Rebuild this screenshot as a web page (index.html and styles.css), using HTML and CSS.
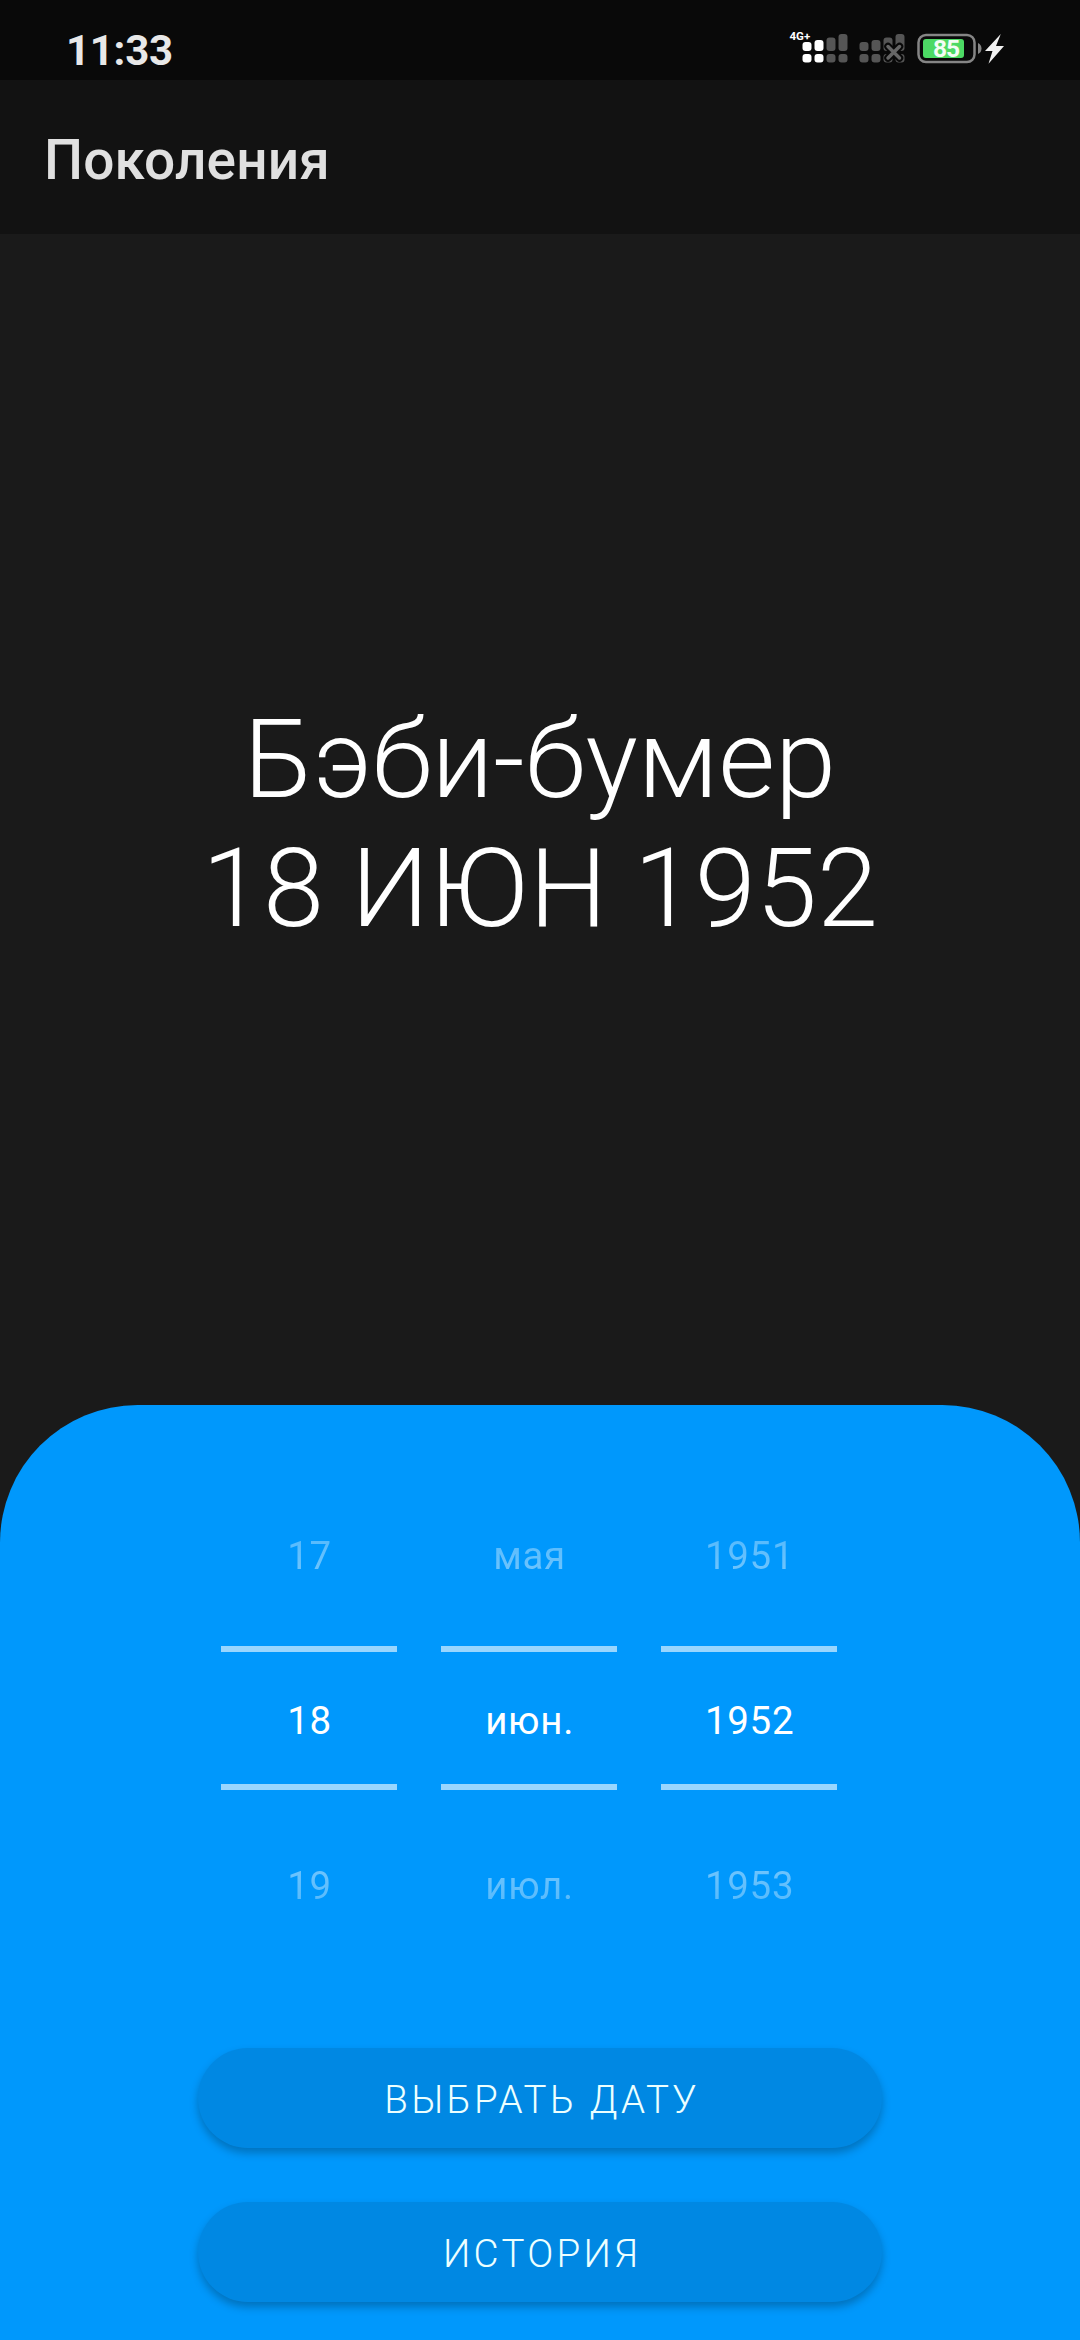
FILE: index.html
```html
<!DOCTYPE html>
<html lang="ru">
<head>
<meta charset="utf-8">
<title>Поколения</title>
<link rel="stylesheet" href="styles.css">
</head>
<body>
<div class="screen">
  <div class="status-bar">
    <span class="clock">11:33</span>
    <svg class="status-icons" viewBox="0 0 220 40" width="220" height="40">
      <text class="network" x="2.500" y="14.500">4G+</text>
      <g fill="#fff" transform="translate(-.5 0)">
        <rect x="16" y="17" width="9" height="9" rx="3"/>
        <rect x="28" y="15" width="9" height="11" rx="3"/>
        <rect x="16" y="29" width="9" height="8.500" rx="3"/>
        <rect x="28" y="29" width="9" height="8.500" rx="3"/>
      </g>
      <g fill="#555" transform="translate(-.5 0)">
        <rect x="40" y="12.500" width="9" height="13.500" rx="3"/>
        <rect x="52" y="9" width="9" height="17" rx="3"/>
        <rect x="40" y="29" width="9" height="8.500" rx="3"/>
        <rect x="52" y="29" width="9" height="8.500" rx="3"/>
        <rect x="73" y="17" width="9" height="9" rx="3"/>
        <rect x="85" y="15" width="9" height="11" rx="3"/>
        <rect x="97" y="12.500" width="9" height="13.500" rx="3"/>
        <rect x="109" y="9" width="9" height="17" rx="3"/>
        <rect x="73" y="29" width="9" height="8.500" rx="3"/>
        <rect x="85" y="29" width="9" height="8.500" rx="3"/>
        <rect x="97" y="29" width="9" height="8.500" rx="3"/>
        <rect x="109" y="29" width="9" height="8.500" rx="3"/>
      </g>
      <path d="M101 21.500l11.500 11.500M112.500 21.500L101 33" stroke="#090909" stroke-width="7.500" stroke-linecap="round"/>
      <path d="M101 21.500l11.500 11.500M112.500 21.500L101 33" stroke="#666" stroke-width="3.500" stroke-linecap="round"/>
      <rect x="131.500" y="10" width="56" height="27" rx="7.500" fill="none" stroke="#858585" stroke-width="2.500"/>
      <path d="M191 18q3.500 1.500 3.500 5.500t-3.500 5.500z" fill="#858585"/>
      <rect x="136" y="14" width="41" height="19" rx="3" fill="#4cd964"/>
      <text class="charge" x="146" y="32.300">85</text>
      <path d="M213.800 9L198 26h7.500l-4 12.700L217 21h-8z" fill="#f2f2f2"/>
    </svg>
  </div>
  <header class="app-bar"><h1 class="title">Поколения</h1></header>
  <main class="result">
    <div>Бэби-бумер</div>
    <div>18 ИЮН 1952</div>
  </main>
  <section class="sheet">
    <div class="picker">
      <div class="column"><span>17</span><span class="selected">18</span><span>19</span></div>
      <div class="column"><span>мая</span><span class="selected">июн.</span><span>июл.</span></div>
      <div class="column"><span>1951</span><span class="selected">1952</span><span>1953</span></div>
    </div>
    <div class="actions">
      <button class="action">ВЫБРАТЬ ДАТУ</button>
      <button class="action">ИСТОРИЯ</button>
    </div>
  </section>
</div>
</body>
</html>
```

FILE: styles.css
```css
* { box-sizing: border-box; }
body { margin: 0; background: #1a1a1a; font-family: Roboto, sans-serif; }
.screen { width: 1080px; height: 2340px; display: flex; flex-direction: column; overflow: hidden; }
.status-bar { height: 80px; background: #090909; display: flex; justify-content: space-between; padding: 25px 73px 0 66px; }
.clock { font-size: 42px; font-weight: 700; line-height: 52px; letter-spacing: -0.3px; color: #e8e8e8; }
.status-icons { display: block; }
.network { font-size: 11.5px; font-weight: 700; fill: #fff; }
.charge { font-size: 24.5px; font-weight: 700; letter-spacing: -1px; fill: #f2fcf4; }
.app-bar { height: 154px; background: #121212; display: flex; align-items: center; padding: 6px 44px 0; }
.title { margin: 0; font-size: 55px; font-weight: 500; line-height: 64px; letter-spacing: 0.12px; color: #e0e0e0; }
.result { height: 1171px; display: flex; flex-direction: column; align-items: center; justify-content: center; padding-top: 11px; font-size: 110px; font-weight: 300; line-height: 128.7px; color: #fff; }
.sheet { flex: 1; background: #0098fc; border-radius: 137.5px 137.5px 0 0; display: flex; flex-direction: column; align-items: center; padding-top: 67px; }
.picker { display: flex; gap: 44px; height: 495px; margin-right: 22px; }
.column { width: 176px; display: flex; flex-direction: column; font-size: 38.5px; letter-spacing: 0.0178em; text-indent: 1.2px; line-height: 45px; color: #fff; text-align: center; padding-top: 61px; }
.column span:first-child { background: linear-gradient(rgba(255,255,255,.32), rgba(255,255,255,.45)); -webkit-background-clip: text; background-clip: text; color: transparent; }
.column span:last-child { background: linear-gradient(rgba(255,255,255,.45), rgba(255,255,255,.32)); -webkit-background-clip: text; background-clip: text; color: transparent; }
.column .selected { height: 144px; margin: 68px 0 73px; border-top: 6px solid #99d6fe; border-bottom: 6px solid #99d6fe; line-height: 138px; }
.actions { display: flex; flex-direction: column; gap: 54px; margin-top: 81px; }
.action { width: 684px; height: 100px; padding: 3px 0 0 4px; border: 0; border-radius: 50px; background: #0088e3; box-shadow: 0 5px 8px rgba(0,0,0,.25); font: 300 38.5px/97px Roboto, sans-serif; letter-spacing: 3.3px; color: #ecffff; }
```
